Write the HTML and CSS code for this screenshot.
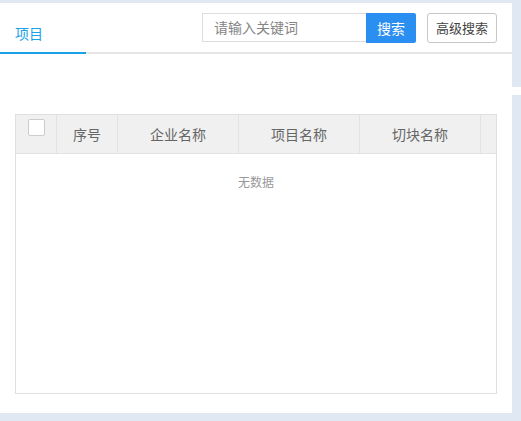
FILE: index.html
```html
<!DOCTYPE html>
<html>
<head>
<meta charset="utf-8">
<link rel="stylesheet" href="styles.css">
</head>
<body>
<div class="page">
  <div class="main">
    <div class="toolbar">
      <div class="tab active">项目</div>
      <div class="search">
        <div class="input">请输入关键词</div>
        <div class="btn-primary">搜索</div>
        <div class="btn">高级搜索</div>
      </div>
    </div>
    <div class="grid">
      <div class="head">
        <div class="cell check"><span class="box"></span></div>
        <div class="cell">序号</div>
        <div class="cell">企业名称</div>
        <div class="cell">项目名称</div>
        <div class="cell">切块名称</div>
        <div class="cell last"></div>
      </div>
      <div class="body">
        <div class="empty">无数据</div>
      </div>
    </div>
  </div>
  <div class="side">
    <div class="side-top"></div>
    <div class="side-gap"></div>
  </div>
</div>
</body>
</html>
```

FILE: styles.css
```css
* { box-sizing: border-box; }
html, body { margin: 0; padding: 0; }
body {
  background: #dfe8f3;
  font-family: "Noto Sans CJK SC", "Noto Sans", sans-serif;
  width: 521px;
  height: 421px;
  overflow: hidden;
}
.page { display: flex; }
.main {
  width: 512px;
  height: 410px;
  margin-top: 3px;
  background: #fff;
  display: flex;
  flex-direction: column;
}
.side { width: 9px; display: flex; flex-direction: column; }
.side-top { height: 87px; }
.side-gap { height: 8px; background: #fff; }

.toolbar {
  height: 51px;
  border-bottom: 2px solid #e6e6e6;
  display: flex;
  align-items: flex-start;
  justify-content: space-between;
}
.tab {
  width: 86px;
  height: 51px;
  padding-left: 15px;
  padding-top: 19px;
  font-size: 14px;
  line-height: 22px;
  color: #1ba1e6;
  border-bottom: 2px solid #1ba1e6;
}
.search {
  display: flex;
  margin-top: 10px;
  margin-right: 15px;
}
.input {
  width: 164px;
  height: 29px;
  border: 1px solid #ddd;
  border-right: none;
  padding-left: 11px;
  font-size: 14px;
  line-height: 27px;
  color: #858585;
}
.btn-primary {
  width: 50px;
  height: 30px;
  background: #2b8ff2;
  color: #fff;
  font-size: 14px;
  line-height: 30px;
  text-align: center;
  border-radius: 0 2px 2px 0;
}
.btn {
  margin-left: 11px;
  width: 70px;
  height: 30px;
  border: 1px solid #c8c8c8;
  border-radius: 3px;
  font-size: 13px;
  line-height: 28px;
  text-align: center;
  color: #444;
}

.grid {
  margin: 60px 15px 0 15px;
  height: 280px;
  border: 1px solid #e0e0e0;
  display: flex;
  flex-direction: column;
}
.head {
  display: grid;
  grid-template-columns: 41px 61px 121px 121px 121px 1fr;
  height: 39px;
  background: #f0f0f0;
  border-bottom: 1px solid #e3e3e3;
}
.cell {
  border-right: 1px solid #e3e3e3;
  font-size: 14px;
  line-height: 38px;
  text-align: center;
  color: #666;
}
.cell.last { border-right: none; }
.check { display: flex; justify-content: center; align-items: flex-start; padding-top: 4px; }
.box {
  width: 17px;
  height: 17px;
  background: #fff;
  border: 1px solid #ccc;
  border-radius: 2px;
}
.body { flex: 1; }
.empty {
  text-align: center;
  font-size: 12px;
  color: #999;
  margin-top: 19px;
  line-height: 18px;
}
```
